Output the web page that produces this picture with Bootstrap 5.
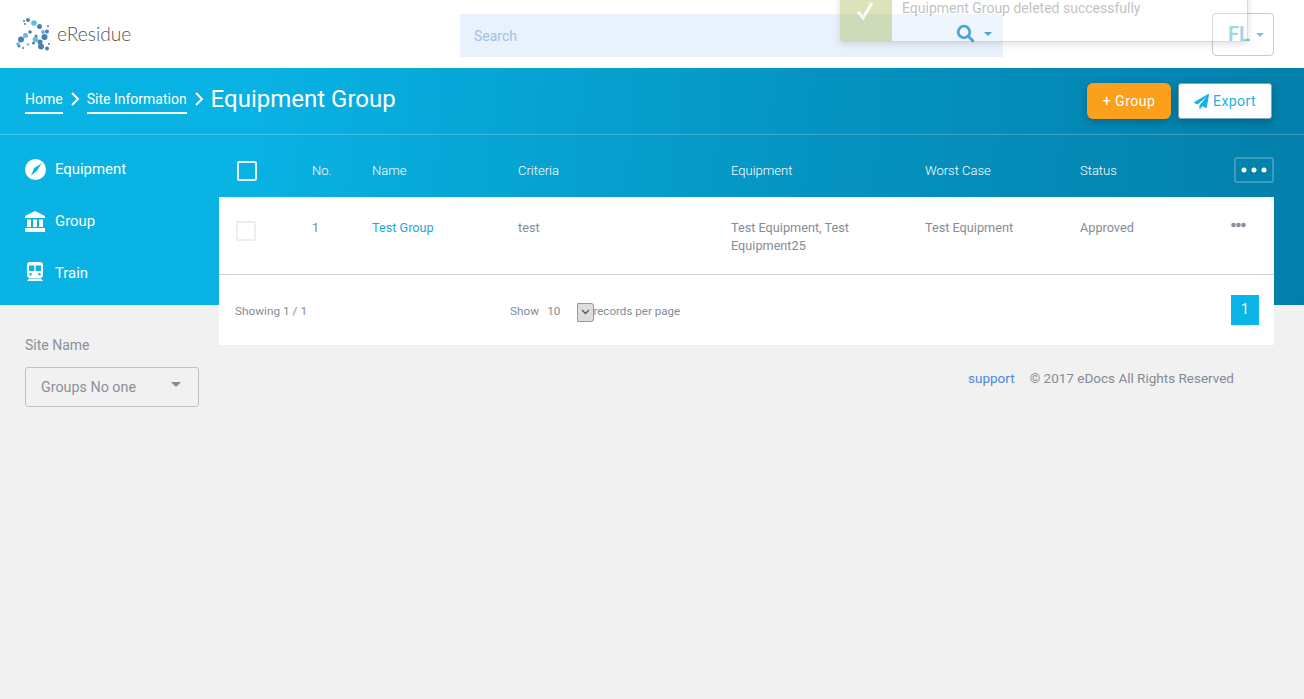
<!DOCTYPE html>
<html lang="en">
<head>
  <meta charset="UTF-8">
  <title>Equipment Group</title>
  <link rel="stylesheet" href="https://cdn.jsdelivr.net/npm/bootstrap@5.3.0/dist/css/bootstrap.min.css">
  <style>
    html, body { height: 100%; }
    body { background: #f1f1f1; font-family: Roboto, "Liberation Sans", sans-serif; color: #858b97; overflow: hidden; }

    /* header */
    .top-bar { height: 68px; background: #fff; padding: 0 30px 0 16px; }
    .logo-wrap { width: 444px; flex: none; }
    .logo-name { font-family: Lato, "Open Sans", sans-serif; font-weight: 300; font-size: 19.2px; color: #555; margin-left: 6px; }
    .search-box { width: 543px; height: 43px; margin-top: 3px; background: #e9f1fc; padding-right: 11px; }
    .search-box input { background: transparent; border: 0; border-radius: 0; box-shadow: none; font-size: 14px; padding: 0 14px; height: 43px; }
    .search-box input::placeholder { color: #a3bfe6; }
    .search-glass { margin-top: -5px; }
    .search-caret { width: 0; height: 0; border: 4px solid transparent; border-top-color: #007fbb; border-bottom: 0; margin: -3px 0 0 9px; }
    .user-btn { width: 62px; height: 43px; margin: 0 0 0 auto; padding-left: 6px; border: 1px solid #c2ccd8; border-radius: 4px; color: #7fc3e1; font-weight: 700; font-size: 20px; gap: 6px; }
    .user-btn .search-caret { margin: 2px 0 0; border-top-color: #7fc3e1; }

    /* toast */
    .note-toast { position: absolute; top: -24px; left: 840px; width: 408px; height: 66px; background: #fff; border: 1px solid #8ea51a; border-radius: 4px; opacity: .3; box-shadow: 0 2px 6px rgba(0,0,0,.4); overflow: hidden; }
    .note-icon { width: 51px; background: #8ea51a; padding-right: 3px; }
    .note-text { font-size: 14px; color: #333; padding: 22px 0 0 10px; line-height: 18px; }

    /* blue band */
    .page-main { height: 631px; background: linear-gradient(95deg, #08b4e5 0%, #08b2e3 20%, #0595c3 60%, #037fab 100%) top / 100% 237px no-repeat; }
    .title-bar { height: 67px; padding: 15px 32px 0 25px; border-bottom: 1px solid rgba(255,255,255,.22); color: #fff; }
    .crumb { color: #fff; font-size: 14px; text-decoration: none; border-bottom: 2px solid #fff; padding-bottom: 3px; margin-top: 6px; line-height: 20px; }
    .crumb-sep { margin: 9px 8px 0; flex: none; }
    .page-title { font-size: 24px; font-weight: 400; margin: 0; line-height: 32px; }
    .btn-add { background: #fba01a; color: #fff; border: 0; width: 84px; height: 36px; font-size: 14px; box-shadow: 0 3px 8px rgba(0,0,0,.25); letter-spacing: .5px; }
    .btn-add:hover { background: #fba01a; color: #fff; }
    .btn-export { background: #fff; color: #17b2e8; border: 1px solid #7ea6bf; border-radius: 3px; width: 94px; height: 36px; font-size: 14px; margin-left: 7px; box-shadow: 0 3px 8px rgba(0,0,0,.25); letter-spacing: .4px; }

    /* sidebar */
    .side-col { width: 219px; flex: none; padding-left: 25px; }
    .side-list { height: 170px; padding-top: 8px; }
    .side-item { height: 52px; color: #fff; font-size: 14.9px; text-decoration: none; }
    .side-icon { width: 30px; }
    .train-icon { margin: -3px 0 0 2px; }
    .site-label { font-size: 14px; margin-top: 32px; line-height: 17px; color: #8a909c; }
    .site-select { width: 174px; height: 40px; margin-top: 13px; border: 1px solid #bfc1c6; border-radius: 3px; font-size: 14.3px; color: #8a909c; padding: 2px 17px 0 15px; }
    .site-caret { width: 0; height: 0; border: 5.5px solid transparent; border-top-color: #858b97; border-bottom: 0; margin-top: -8px; }

    /* table */
    .content-col { width: 1055px; flex: none; }
    .data-grid { table-layout: fixed; width: 1055px; margin: 0; font-size: 12.7px; --bs-table-bg: transparent; }
    .data-grid th { height: 62px; font-size: 13px; font-weight: 300; color: #fff; vertical-align: middle; padding: 9px 0 0; border: 0; line-height: 18px; }
    .data-grid td { height: 77px; background: #fff; color: #858b97; vertical-align: top; padding: 22px 0 0; border-bottom: 1px solid #d2d2d2; line-height: 18px; }
    .cw-check { width: 93px; } .cw-no { width: 60px; } .cw-name { width: 146px; } .cw-crit { width: 213px; }
    .cw-equip { width: 194px; } .cw-worst { width: 155px; } .cw-status { width: 154px; } .cw-act { width: 40px; }
    .head-check { width: 20px; height: 20px; margin-left: 18px; border: 2px solid #e8eef1; border-radius: 2px; display: block; }
    .row-check { width: 20px; height: 20px; margin: 2px 0 0 17px; border: 2px solid #eee; border-radius: 2px; display: block; }
    .dots-btn { width: 40px; height: 26px; border: 2px solid rgba(255,255,255,.22); border-radius: 3px; margin-top: -2px; }
    .row-dots { margin: 2px 0 0 -3px; }
    .row-link { color: #17a9dd; text-decoration: none; }
    .table-foot { height: 70px; background: #fff; font-size: 11.8px; padding: 5px 15px 0 16px; color: #858b97; }
    .foot-show { margin-left: 203px; }
    .size-arrow { width: 17px; height: 19px; background: #ddd; border: 1px solid #999; border-radius: 0 3px 3px 0; margin: 0 -1px 0 17px; }
    .per-page { font-size: 11.6px; }
    .page-one { width: 28px; height: 30px; background: #0ab4e6; color: #fff; font-size: 14px; margin: -5px 0 0 auto; }
    .foot-line { font-size: 13.5px; padding: 24px 40px 0 0; line-height: 18px; }
    .foot-line a { color: #4a8ad8; text-decoration: none; margin-right: 15px; }
  </style>
</head>
<body>
  <div class="note-toast d-flex">
    <div class="note-icon d-flex justify-content-center">
      <svg width="18" height="64" viewBox="0 0 18 64"><path d="M2 35l5 6 9-15" fill="none" stroke="#fff" stroke-width="3"/></svg>
    </div>
    <div class="note-text">Equipment Group deleted successfully</div>
  </div>

  <nav class="top-bar d-flex align-items-center">
    <div class="logo-wrap d-flex align-items-center">
      <svg width="35" height="33" viewBox="0 0 35 33">
        <g fill="#4a7fb5">
          <circle cx="12" cy="2" r="2"/><circle cx="23.500" cy="8.500" r="2.500"/><circle cx="31" cy="13.500" r="2"/><circle cx="28.500" cy="19" r="3"/><circle cx="14" cy="14" r="1.800"/>
          <circle cx="5" cy="21.500" r="3"/><circle cx="3" cy="28" r="1.500"/><circle cx="24" cy="24" r="2.500"/><circle cx="25" cy="28.500" r="3"/><circle cx="31" cy="30.500" r="2"/><circle cx="20" cy="18" r="1.500"/><circle cx="17.500" cy="25" r="1.500"/>
        </g>
        <g fill="#5cc0da">
          <circle cx="18" cy="5" r="2.800"/><circle cx="9.500" cy="17.500" r="2.500"/><circle cx="27" cy="14" r="2"/><circle cx="19.500" cy="21.500" r="2.800"/><circle cx="2" cy="26" r="1.800"/><circle cx="12" cy="26.500" r="1.200"/>
        </g>
        <g fill="#4a7fb5"><circle cx="9" cy="6" r="1"/><circle cx="8" cy="3" r="1"/><circle cx="32" cy="8" r="1"/><circle cx="33" cy="26" r="1"/><circle cx="7" cy="30" r="1"/></g>
      </svg>
      <span class="logo-name">eResidue</span>
    </div>
    <div class="search-box d-flex align-items-center">
      <input class="form-control" type="text" placeholder="Search">
      <svg class="search-glass flex-shrink-0" width="19" height="19" viewBox="0 0 19 19"><circle cx="8" cy="8" r="5.800" fill="none" stroke="#007fbb" stroke-width="2.800"/><path d="M12.500 12.500l5 5" stroke="#007fbb" stroke-width="3"/></svg>
      <span class="search-caret flex-shrink-0"></span>
    </div>
    <div class="user-btn d-flex align-items-center justify-content-center">FL <span class="search-caret"></span></div>
  </nav>

  <main class="page-main">
    <div class="title-bar d-flex align-items-start">
      <a class="crumb" href="#">Home</a>
      <svg class="crumb-sep" width="8" height="14" viewBox="0 0 8 14"><path d="M1 1l6 6-6 6" fill="none" stroke="#fff" stroke-width="2"/></svg>
      <a class="crumb" href="#">Site Information</a>
      <svg class="crumb-sep" width="8" height="14" viewBox="0 0 8 14"><path d="M1 1l6 6-6 6" fill="none" stroke="#fff" stroke-width="2"/></svg>
      <h1 class="page-title">Equipment Group</h1>
      <button class="btn btn-add ms-auto p-0" type="button">+ Group</button>
      <button class="btn btn-export p-0 d-flex align-items-center justify-content-center gap-1" type="button">
        <svg width="15" height="15" viewBox="0 0 1792 1792"><path fill="#17b2e8" d="M1764 11q33 24 27 64l-256 1536q-5 29-32 45-14 8-31 8-11 0-24-5l-453-185-242 295q-18 23-49 23-13 0-22-4-19-7-30.500-23.500t-11.500-36.500v-349l864-1059-1069 925-395-162q-37-14-40-55-2-40 32-59l1664-960q15-9 32-9 20 0 36 11z"/></svg>
        Export
      </button>
    </div>

    <div class="d-flex">
      <aside class="side-col">
        <div class="side-list">
          <a class="side-item d-flex align-items-center" href="#">
            <span class="side-icon d-flex"><svg width="21" height="21" viewBox="0 0 21 21"><circle cx="10.500" cy="10.500" r="10.500" fill="#fff"/><path d="M16.500 4.500L11.800 12 6 16.500 9.200 9z" fill="#08b2e3"/></svg></span>Equipment
          </a>
          <a class="side-item d-flex align-items-center" href="#">
            <span class="side-icon d-flex"><svg width="20" height="21" viewBox="0 0 20 21" fill="#fff"><path d="M10 0l10 5v2H0V5z"/><rect x="2" y="8.500" width="4" height="7.500"/><rect x="8" y="8.500" width="4" height="7.500"/><rect x="14" y="8.500" width="4" height="7.500"/><rect y="17" width="20" height="4"/></svg></span>Group
          </a>
          <a class="side-item d-flex align-items-center" href="#">
            <span class="side-icon d-flex"><svg class="train-icon" width="16" height="19" viewBox="0 0 16 19"><path fill="#fff" fill-rule="evenodd" d="M3 0h10q3 0 3 3v10q0 2.500-3 3H3q-3-.5-3-3V3q0-3 3-3zM2 3.500V9h5.300V3.500zm6.700 0V9H14V3.500zM3.500 11a1.300 1.300 0 100 2.600 1.300 1.300 0 000-2.600zm9 0a1.300 1.300 0 100 2.600 1.300 1.300 0 000-2.600z"/><path fill="#fff" d="M2 16.500h12l2 2.500H0z"/></svg></span>Train
          </a>
        </div>
        <div class="site-label">Site Name</div>
        <div class="site-select d-flex align-items-center justify-content-between">
          <span>Groups No one</span><span class="site-caret"></span>
        </div>
      </aside>

      <section class="content-col">
        <table class="table data-grid">
          <thead>
            <tr>
              <th class="cw-check"><span class="head-check"></span></th>
              <th class="cw-no">No.</th>
              <th class="cw-name">Name</th>
              <th class="cw-crit">Criteria</th>
              <th class="cw-equip">Equipment</th>
              <th class="cw-worst">Worst Case</th>
              <th class="cw-status">Status</th>
              <th class="cw-act">
                <div class="dots-btn d-flex align-items-center justify-content-center">
                  <svg width="26" height="6" viewBox="0 0 26 6" fill="#fff"><circle cx="3" cy="3" r="2.500"/><circle cx="13" cy="3" r="2.500"/><circle cx="23" cy="3" r="2.500"/></svg>
                </div>
              </th>
            </tr>
          </thead>
          <tbody>
            <tr>
              <td><span class="row-check"></span></td>
              <td>1</td>
              <td><a class="row-link" href="#">Test Group</a></td>
              <td>test</td>
              <td>Test Equipment, Test Equipment25</td>
              <td>Test Equipment</td>
              <td>Approved</td>
              <td><svg class="row-dots d-block" width="15" height="8" viewBox="0 0 15 8" fill="#8a8f9c"><circle cx="2.500" cy="4" r="2.300"/><circle cx="7.500" cy="4" r="2.300"/><circle cx="12.500" cy="4" r="2.300"/></svg></td>
            </tr>
          </tbody>
        </table>
        <div class="table-foot d-flex align-items-center">
          <span>Showing 1 / 1</span>
          <span class="foot-show d-flex align-items-center">
            <span>Show</span><span class="ms-2">10</span>
            <span class="size-arrow d-flex align-items-center justify-content-center">
              <svg width="9" height="6" viewBox="0 0 9 6"><path d="M1 1l3.500 3.500L8 1" fill="none" stroke="#555" stroke-width="1.300"/></svg>
            </span>
            <span class="per-page">records per page</span>
          </span>
          <span class="page-one d-flex align-items-center justify-content-center">1</span>
        </div>
        <div class="foot-line text-end"><a href="#">support</a>© 2017 eDocs All Rights Reserved</div>
      </section>
    </div>
  </main>

  <script src="https://cdn.jsdelivr.net/npm/bootstrap@5.3.0/dist/js/bootstrap.bundle.min.js"></script>
</body>
</html>
